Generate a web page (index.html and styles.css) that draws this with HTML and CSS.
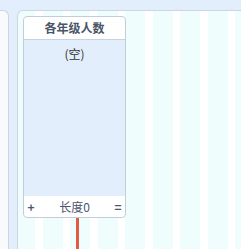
FILE: index.html
```html
<!DOCTYPE html>
<html>
<head>
<meta charset="utf-8">
<link rel="stylesheet" href="styles.css">
</head>
<body>
<div class="page">
  <div class="side"></div>
  <div class="board">
    <div class="stack">
      <div class="card">
        <div class="card-head">各年级人数</div>
        <div class="card-body"><span class="empty">(空)</span></div>
        <div class="card-foot">
          <span class="op">+</span>
          <span class="len">长度0</span>
          <span class="op">=</span>
        </div>
      </div>
      <div class="wire"></div>
    </div>
  </div>
</div>
</body>
</html>
```
FILE: styles.css
```css
html, body {
  margin: 0;
  padding: 0;
  background: #e3eefc;
  overflow: hidden;
  font-family: "Noto Sans CJK SC", "Noto Sans", sans-serif;
}
.page {
  display: flex;
  gap: 8px;
  padding-top: 10px;
  height: 239px;
  width: 241px;
  overflow: hidden;
}
.side {
  width: 8px;
  flex: none;
  background: #f8fafc;
  border: 1px solid #ccd5e1;
  border-left: none;
  border-bottom: none;
  border-top-right-radius: 6px;
}
.board {
  flex: 1;
  min-width: 0;
  border: 1px solid #ccd5e1;
  border-bottom: none;
  border-right: none;
  border-top-left-radius: 6px;
  background-color: #ffffff;
  background-image: repeating-linear-gradient(to right, #effdfd 0 20px, #ffffff 20px 27.5px);
  background-position: -3px 0;
  padding: 5px 0 0 5px;
  box-sizing: border-box;
  height: 239px;
  overflow: hidden;
}
.stack {
  display: flex;
  flex-direction: column;
  width: 103px;
}
.card {
  width: 103px;
  height: 202px;
  box-sizing: border-box;
  border: 1px solid #c3cdda;
  border-radius: 4px;
  background: #ffffff;
  display: flex;
  flex-direction: column;
  overflow: hidden;
}
.card-head {
  height: 22px;
  flex: none;
  border-bottom: 1px solid #c9d3e0;
  display: flex;
  align-items: center;
  justify-content: center;
  font-size: 12px;
  font-weight: 700;
  color: #4a5568;
  line-height: 1;
}
.card-body {
  flex: 1;
  background: #e3eefc;
  display: flex;
  justify-content: center;
  padding-top: 7px;
}
.empty {
  font-size: 12px;
  line-height: 14px;
  color: #333333;
}
.card-foot {
  height: 21px;
  flex: none;
  display: flex;
  align-items: center;
  justify-content: space-between;
  padding: 0 3px 0 3px;
  color: #4a5570;
  font-size: 12px;
  line-height: 1;
}
.op {
  font-size: 12px;
  font-weight: 700;
  width: 8px;
  text-align: center;
}
.len {
  font-size: 12px;
}
.wire {
  width: 3px;
  height: 40px;
  margin-left: 53px;
  background: #e05a44;
}
```
